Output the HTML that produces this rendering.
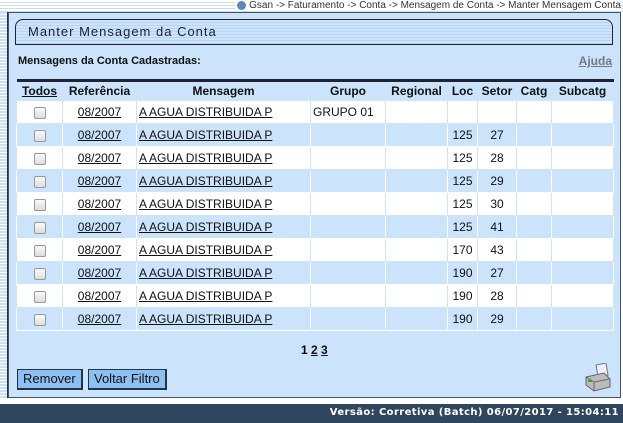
<!DOCTYPE html>
<html><head><style>
body{margin:0;width:623px;height:423px;overflow:hidden;background:#fff;font-family:"Liberation Sans",Arial,sans-serif;position:relative}
.left{position:absolute;left:0;top:12px;width:7px;height:386px;background:repeating-linear-gradient(#cde0f2 0 2px,#fff 2px 3px);border-right:1px solid #234}
.top{position:absolute;left:0;top:0;width:623px;height:12px;background:repeating-linear-gradient(#fff 0 2px,#c8dcf0 2px 3px)}
.crumb{position:absolute;right:2px;top:0;font-size:10px;color:#333;background:#fff;padding-left:14px;line-height:11px}
.crumb:before{content:"";position:absolute;left:2px;top:1px;width:9px;height:9px;border-radius:50%;background:#5b86c0}
.main{position:absolute;left:8px;top:12px;width:613px;height:386px;background:#cbe3fb;border:1px solid #456;box-sizing:border-box}
.title{position:absolute;left:6px;top:6px;width:598px;height:26px;border:1px solid #223;border-radius:8px 8px 0 0;background:repeating-linear-gradient(#cbe3fb 0 2px,#b8d4f0 2px 3px);box-sizing:border-box;font-size:13px;letter-spacing:1px;color:#223;padding:4px 0 0 12px}
.lbl{position:absolute;left:9px;top:42px;font-size:11px;font-weight:bold;color:#111}
.aj{position:absolute;right:8px;top:41px;font-size:12px;font-weight:bold;color:#778;text-decoration:underline}
table{position:absolute;left:7px;top:66px;width:598px;border-collapse:collapse;border-top:3px solid #223;font-size:12px}
th{height:18px;font-weight:bold;color:#111;background:#cbe3fb;padding:0;line-height:14px}
td{height:22px;border:1px solid #cbe3fb;padding:0 2px;color:#111;line-height:14px}
tr.w td{background:#fff}
tr.b td{background:#cbe3fb;border-color:#fff}
.c{text-align:center}
a{color:#111;text-decoration:underline}
.cb{display:inline-block;width:10px;height:10px;border:1px solid #999;border-radius:2px;background:linear-gradient(#fafafa,#ddd);vertical-align:middle}
.pg{position:absolute;left:292px;top:330px;font-size:12px;font-weight:bold}
.btn{position:absolute;top:356px;height:18px;background:#8cc0f2;border:1px solid #234;border-width:1px 2px 2px 1px;font-size:13px;color:#111;padding:0 5px;line-height:18px}
.foot{position:absolute;left:0;top:404px;width:623px;height:19px;background:#2f465d;color:#fff;font:bold 10px "DejaVu Sans",sans-serif;text-align:right;line-height:17px;padding-right:4px;box-sizing:border-box;letter-spacing:.4px}
</style></head><body>
<div class="top"></div>
<div class="crumb">Gsan -&gt; Faturamento -&gt; Conta -&gt; Mensagem de Conta -&gt; Manter Mensagem Conta</div>
<div class="left"></div>
<div class="main">
<div class="title">Manter Mensagem da Conta</div>
<div class="lbl">Mensagens da Conta Cadastradas:</div>
<div class="aj">Ajuda</div>
<table>
<tr><th style="width:46px"><a>Todos</a></th><th style="width:74px">Referência</th><th style="width:174px">Mensagem</th><th style="width:75px">Grupo</th><th style="width:62px">Regional</th><th style="width:30px">Loc</th><th style="width:39px">Setor</th><th style="width:35px">Catg</th><th>Subcatg</th></tr>
<tr class="w"><td class="c"><span class="cb"></span></td><td class="c"><a>08/2007</a></td><td><a>A AGUA DISTRIBUIDA P</a></td><td>GRUPO 01</td><td></td><td></td><td></td><td></td><td></td></tr>
<tr class="b"><td class="c"><span class="cb"></span></td><td class="c"><a>08/2007</a></td><td><a>A AGUA DISTRIBUIDA P</a></td><td></td><td></td><td class="c">125</td><td class="c">27</td><td></td><td></td></tr>
<tr class="w"><td class="c"><span class="cb"></span></td><td class="c"><a>08/2007</a></td><td><a>A AGUA DISTRIBUIDA P</a></td><td></td><td></td><td class="c">125</td><td class="c">28</td><td></td><td></td></tr>
<tr class="b"><td class="c"><span class="cb"></span></td><td class="c"><a>08/2007</a></td><td><a>A AGUA DISTRIBUIDA P</a></td><td></td><td></td><td class="c">125</td><td class="c">29</td><td></td><td></td></tr>
<tr class="w"><td class="c"><span class="cb"></span></td><td class="c"><a>08/2007</a></td><td><a>A AGUA DISTRIBUIDA P</a></td><td></td><td></td><td class="c">125</td><td class="c">30</td><td></td><td></td></tr>
<tr class="b"><td class="c"><span class="cb"></span></td><td class="c"><a>08/2007</a></td><td><a>A AGUA DISTRIBUIDA P</a></td><td></td><td></td><td class="c">125</td><td class="c">41</td><td></td><td></td></tr>
<tr class="w"><td class="c"><span class="cb"></span></td><td class="c"><a>08/2007</a></td><td><a>A AGUA DISTRIBUIDA P</a></td><td></td><td></td><td class="c">170</td><td class="c">43</td><td></td><td></td></tr>
<tr class="b"><td class="c"><span class="cb"></span></td><td class="c"><a>08/2007</a></td><td><a>A AGUA DISTRIBUIDA P</a></td><td></td><td></td><td class="c">190</td><td class="c">27</td><td></td><td></td></tr>
<tr class="w"><td class="c"><span class="cb"></span></td><td class="c"><a>08/2007</a></td><td><a>A AGUA DISTRIBUIDA P</a></td><td></td><td></td><td class="c">190</td><td class="c">28</td><td></td><td></td></tr>
<tr class="b"><td class="c"><span class="cb"></span></td><td class="c"><a>08/2007</a></td><td><a>A AGUA DISTRIBUIDA P</a></td><td></td><td></td><td class="c">190</td><td class="c">29</td><td></td><td></td></tr>
</table>
<div class="pg">1 <a>2</a> <a>3</a></div>
<div class="btn" style="left:8px">Remover</div>
<div class="btn" style="left:79px">Voltar Filtro</div>
<svg style="position:absolute;left:575px;top:350px" width="28" height="30" viewBox="0 0 28 30"><polygon points="12,2 22,0 24,12 14,14" fill="#eef" stroke="#777"/><path d="M2 14 L20 10 L26 16 L26 24 L10 28 L2 22Z" fill="#bbb" stroke="#666"/><path d="M2 14 L10 19 L26 16 M10 19 L10 28" fill="none" stroke="#666"/><rect x="4" y="17" width="4" height="2" fill="#3a3"/></svg>
</div>
<div class="foot">Versão: Corretiva (Batch) 06/07/2017 - 15:04:11</div>
</body></html>
